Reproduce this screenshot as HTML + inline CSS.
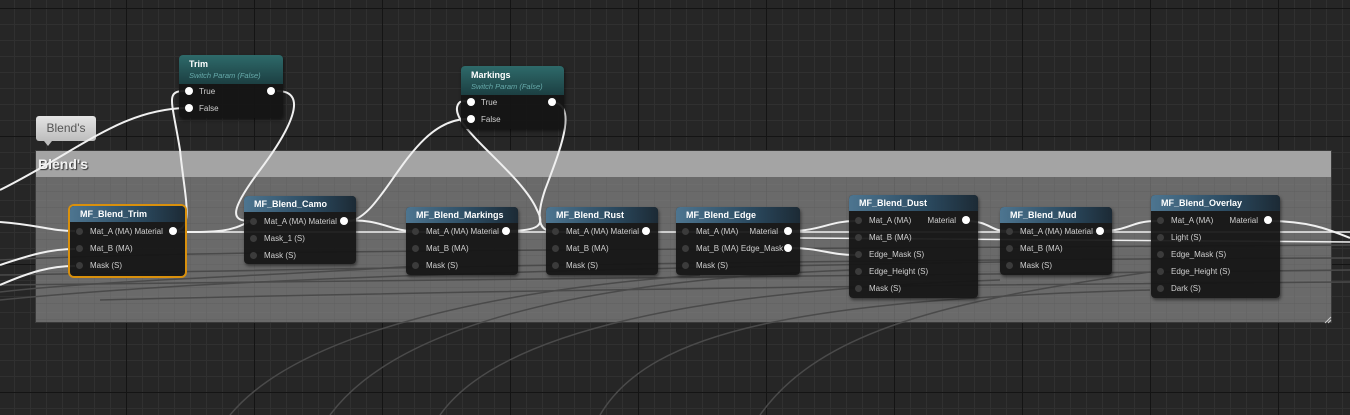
<!DOCTYPE html>
<html><head><meta charset="utf-8"><style>
html,body{margin:0;padding:0;}
body{width:1350px;height:415px;overflow:hidden;position:relative;font-family:"Liberation Sans",sans-serif;
background-color:#262626;
background-image:
linear-gradient(#141414 1px,transparent 1px),
linear-gradient(90deg,#141414 1px,transparent 1px),
linear-gradient(#303030 1px,transparent 1px),
linear-gradient(90deg,#303030 1px,transparent 1px);
background-size:128px 128px,128px 128px,16px 16px,16px 16px;
background-position:-2px 8px,-2px 8px,-2px 8px,-2px 8px;}
.cm{position:absolute;left:36px;top:151px;width:1295px;height:171px;background:rgba(130,130,130,0.75);
background-image:linear-gradient(rgba(95,95,95,.5) 1px,transparent 1px),linear-gradient(90deg,rgba(95,95,95,.5) 1px,transparent 1px);background-size:16px 16px;background-position:-6px 8px;box-shadow:0 0 0 1px #3a3a3a;}
.cmh{position:absolute;left:0;top:0;right:0;height:26px;background:#a4a4a4;color:#f2f2f2;font-weight:bold;font-size:14px;line-height:26px;padding-left:2px;text-shadow:1px 1px 1px #333;}
.bub{position:absolute;left:36px;top:116px;width:60px;height:25px;background:linear-gradient(#e4e4e4,#bdbdbd);border-radius:3px;color:#555;font-size:12px;line-height:25px;text-align:center;}
.bub:after{content:"";position:absolute;left:8px;bottom:-5px;border:4px solid transparent;border-top:5px solid #bdbdbd;border-bottom:0;}
.node{position:absolute;background:rgba(20,20,20,0.93);border-radius:4px;box-shadow:1px 2px 3px rgba(0,0,0,.5);color:#d0d0d0;font-size:8px;}
.hd{height:16px;border-radius:4px 4px 0 0;background:linear-gradient(90deg,#4d7590,#2b4a60 60%,#1c2a35);color:#fff;font-weight:bold;font-size:9px;line-height:16px;padding-left:10px;}
.sw .hd{height:27px;background:linear-gradient(#2e6a6a,#1c3f42);line-height:14px;padding-top:2px;}
.sw .hd i{display:block;font-weight:normal;font-size:7.5px;color:#6aa;line-height:10px;}
.r{position:absolute;left:0;right:0;height:17px;line-height:17px;}
.r .l{position:absolute;left:20px;}
.r .o{position:absolute;right:22px;}
.pi{position:absolute;left:6px;top:5px;width:7px;height:7px;border-radius:50%;background:#3b3b3b;}
.pw{position:absolute;left:6px;top:4px;width:8px;height:8px;border-radius:50%;background:#fff;}
.po{position:absolute;right:8px;top:4px;width:8px;height:8px;border-radius:50%;background:#fff;}
.sel{box-shadow:0 0 0 2px #d9900c;}
svg{position:absolute;left:0;top:0;}
</style></head><body>
<div class="cm"><div class="cmh">Blend's</div>
<svg width="20" height="20" style="left:1283px;top:160px"><path d="M6 12 L12 6 M9 12 L12 9" stroke="#ccc" stroke-width="1"/></svg></div>
<div class="bub">Blend's</div>
<svg width="1350" height="415" fill="none">
<g stroke="#4a4a4a" stroke-width="1.5">
<path d="M0 260 C200 250 600 250 1350 245"/><path d="M0 275 C300 270 700 260 1350 258"/>
<path d="M0 285 C300 280 800 275 1350 270"/><path d="M0 300 C200 280 500 270 1000 262"/>
<path d="M230 415 C300 330 500 290 700 275"/><path d="M330 415 C400 320 600 280 850 270"/>
<path d="M440 415 C500 330 700 290 1000 280"/><path d="M600 415 C650 330 800 300 1150 290"/>
<path d="M760 415 C820 330 950 300 1150 272"/><path d="M0 292 C100 280 300 275 430 265"/>
<path d="M100 300 C500 290 900 285 1350 282"/>
</g>
<g stroke="#f0f0f0" stroke-width="2">
<path d="M0 222 C40 225 50 231 75 231"/>
<path d="M0 190 C80 150 120 110 185 108"/>
<path d="M0 265 C30 255 50 249 75 249"/><path d="M0 285 C30 272 50 266 75 266"/>
<path d="M173 231 C195 231 185 200 180 150 C172 100 165 91 185 91"/>
<path d="M178 232 C220 232 230 232 250 221"/>
<path d="M277 91 C310 91 290 130 260 170 C230 210 230 221 250 221"/>
<path d="M344 221 C380 218 390 231 412 231"/>
<path d="M185 232 L1350 232" stroke-width="1.5"/>
<path d="M350 221 C385 215 410 120 467 119"/>
<path d="M506 231 C540 231 545 225 537 210 C520 170 440 120 460 102 C465 100 467 102 467 102"/>
<path d="M550 102 C580 102 560 150 545 190 C535 220 540 231 552 231"/>
<path d="M790 231 C820 231 830 221 855 221"/><path d="M790 248 C820 248 830 255 855 255"/>
<path d="M965 221 C990 221 990 231 1006 231"/><path d="M1100 231 C1130 231 1130 221 1157 221"/>
<path d="M1268 221 C1310 221 1330 230 1350 238"/>
<path d="M800 238 L1350 242" stroke-width="1.5"/>
</g></svg>

<div class="node sw" style="left:179px;top:55px;width:104px;height:63px"><div class="hd">Trim<i>Switch Param (False)</i></div>
<div class="r" style="top:28px"><span class="pw"></span><span class="l">True</span><span class="po"></span></div>
<div class="r" style="top:45px"><span class="pw"></span><span class="l">False</span></div></div>

<div class="node sw" style="left:461px;top:66px;width:103px;height:63px"><div class="hd">Markings<i>Switch Param (False)</i></div>
<div class="r" style="top:28px"><span class="pw"></span><span class="l">True</span><span class="po"></span></div>
<div class="r" style="top:45px"><span class="pw"></span><span class="l">False</span></div></div>

<div class="node sel" style="left:70px;top:206px;width:115px;height:70px"><div class="hd">MF_Blend_Trim</div>
<div class="r" style="top:17px"><span class="pi"></span><span class="l">Mat_A (MA) Material</span><span class="po"></span></div>
<div class="r" style="top:34px"><span class="pi"></span><span class="l">Mat_B (MA)</span></div>
<div class="r" style="top:51px"><span class="pi"></span><span class="l">Mask (S)</span></div></div>

<div class="node" style="left:244px;top:196px;width:112px;height:68px"><div class="hd">MF_Blend_Camo</div>
<div class="r" style="top:17px"><span class="pi"></span><span class="l">Mat_A (MA) Material</span><span class="po"></span></div>
<div class="r" style="top:34px"><span class="pi"></span><span class="l">Mask_1 (S)</span></div>
<div class="r" style="top:51px"><span class="pi"></span><span class="l">Mask (S)</span></div></div>

<div class="node" style="left:406px;top:207px;width:112px;height:68px"><div class="hd">MF_Blend_Markings</div>
<div class="r" style="top:16px"><span class="pi"></span><span class="l">Mat_A (MA) Material</span><span class="po"></span></div>
<div class="r" style="top:33px"><span class="pi"></span><span class="l">Mat_B (MA)</span></div>
<div class="r" style="top:50px"><span class="pi"></span><span class="l">Mask (S)</span></div></div>

<div class="node" style="left:546px;top:207px;width:112px;height:68px"><div class="hd">MF_Blend_Rust</div>
<div class="r" style="top:16px"><span class="pi"></span><span class="l">Mat_A (MA)</span><span class="o" style="right:19px">Material</span><span class="po"></span></div>
<div class="r" style="top:33px"><span class="pi"></span><span class="l">Mat_B (MA)</span></div>
<div class="r" style="top:50px"><span class="pi"></span><span class="l">Mask (S)</span></div></div>

<div class="node" style="left:676px;top:207px;width:124px;height:68px"><div class="hd">MF_Blend_Edge</div>
<div class="r" style="top:16px"><span class="pi"></span><span class="l">Mat_A (MA)</span><span class="o">Material</span><span class="po"></span></div>
<div class="r" style="top:33px"><span class="pi"></span><span class="l">Mat_B (MA) Edge_Mask</span><span class="po"></span></div>
<div class="r" style="top:50px"><span class="pi"></span><span class="l">Mask (S)</span></div></div>

<div class="node" style="left:849px;top:195px;width:129px;height:103px"><div class="hd">MF_Blend_Dust</div>
<div class="r" style="top:17px"><span class="pi"></span><span class="l">Mat_A (MA)</span><span class="o">Material</span><span class="po"></span></div>
<div class="r" style="top:34px"><span class="pi"></span><span class="l">Mat_B (MA)</span></div>
<div class="r" style="top:51px"><span class="pi"></span><span class="l">Edge_Mask (S)</span></div>
<div class="r" style="top:68px"><span class="pi"></span><span class="l">Edge_Height (S)</span></div>
<div class="r" style="top:85px"><span class="pi"></span><span class="l">Mask (S)</span></div></div>

<div class="node" style="left:1000px;top:207px;width:112px;height:68px"><div class="hd">MF_Blend_Mud</div>
<div class="r" style="top:16px"><span class="pi"></span><span class="l">Mat_A (MA) Material</span><span class="po"></span></div>
<div class="r" style="top:33px"><span class="pi"></span><span class="l">Mat_B (MA)</span></div>
<div class="r" style="top:50px"><span class="pi"></span><span class="l">Mask (S)</span></div></div>

<div class="node" style="left:1151px;top:195px;width:129px;height:103px"><div class="hd">MF_Blend_Overlay</div>
<div class="r" style="top:17px"><span class="pi"></span><span class="l">Mat_A (MA)</span><span class="o">Material</span><span class="po"></span></div>
<div class="r" style="top:34px"><span class="pi"></span><span class="l">Light (S)</span></div>
<div class="r" style="top:51px"><span class="pi"></span><span class="l">Edge_Mask (S)</span></div>
<div class="r" style="top:68px"><span class="pi"></span><span class="l">Edge_Height (S)</span></div>
<div class="r" style="top:85px"><span class="pi"></span><span class="l">Dark (S)</span></div></div>
</body></html>
